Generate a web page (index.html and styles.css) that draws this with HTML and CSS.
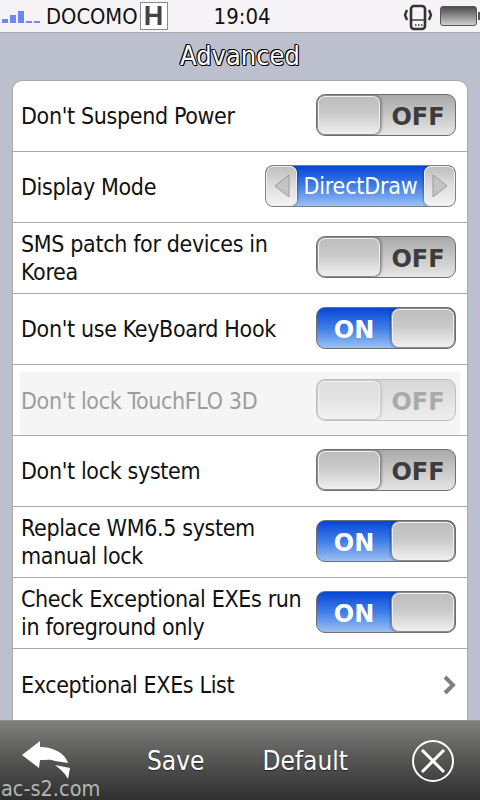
FILE: index.html
```html
<!DOCTYPE html>
<html lang="en">

<head>
    <meta charset="UTF-8">
    <meta name="viewport" content="width=device-width, initial-scale=1.0">
    <title>Advanced</title>
    <link rel="stylesheet" href="styles.css">
</head>

<body>
    <div class="status-bar">
        <div class="signal">
            <span class="bar bar-1"></span>
            <span class="bar bar-2"></span>
            <span class="bar bar-3"></span>
            <span class="bar bar-4"></span>
            <span class="bar bar-4"></span>
        </div>
        <span class="carrier">DOCOMO</span>
        <span class="net-type">H</span>
        <span class="clock">19:04</span>
        <svg class="vibrate" width="30" height="30" viewBox="0 0 30 30" fill="none" stroke="#333">
            <rect x="8" y="5" width="14" height="23" rx="3" stroke-width="2.6" />
            <path d="M9 19h12" stroke-width="1.4" />
            <path d="M12 24h1.5M15 24h1.5M18 24h1.5" stroke-width="1.6" />
            <path d="M4 9l-2 5 2 5M26 9l2 5-2 5" stroke-width="2.4" />
        </svg>
        <div class="battery"><span class="battery-cap"></span></div>
    </div>

    <h1 class="title">Advanced</h1>

    <div class="list">
        <div class="row">
            <span class="label">Don't Suspend Power</span>
            <div class="toggle off"><span class="knob"></span><span class="state">OFF</span></div>
        </div>
        <div class="row">
            <span class="label">Display Mode</span>
            <div class="spinner">
                <span class="spin-btn">
                    <svg width="16" height="24" viewBox="0 0 16 24"><path d="M15 1v22L1 12z" fill="#c4c4c4" stroke="#9a9a9a" /></svg>
                </span>
                <span class="spin-value">DirectDraw</span>
                <span class="spin-btn">
                    <svg width="16" height="24" viewBox="0 0 16 24"><path d="M1 1v22l14-11z" fill="#c4c4c4" stroke="#9a9a9a" /></svg>
                </span>
            </div>
        </div>
        <div class="row">
            <span class="label">SMS patch for devices in Korea</span>
            <div class="toggle off"><span class="knob"></span><span class="state">OFF</span></div>
        </div>
        <div class="row">
            <span class="label">Don't use KeyBoard Hook</span>
            <div class="toggle on"><span class="state">ON</span><span class="knob"></span></div>
        </div>
        <div class="row row-disabled">
            <div class="disabled-inner">
                <span class="label">Don't lock TouchFLO 3D</span>
                <div class="toggle off"><span class="knob"></span><span class="state">OFF</span></div>
            </div>
        </div>
        <div class="row">
            <span class="label">Don't lock system</span>
            <div class="toggle off"><span class="knob"></span><span class="state">OFF</span></div>
        </div>
        <div class="row">
            <span class="label">Replace WM6.5 system manual lock</span>
            <div class="toggle on"><span class="state">ON</span><span class="knob"></span></div>
        </div>
        <div class="row">
            <span class="label">Check Exceptional EXEs run in foreground only</span>
            <div class="toggle on"><span class="state">ON</span><span class="knob"></span></div>
        </div>
        <div class="row">
            <span class="label">Exceptional EXEs List</span>
            <svg class="chevron" width="14" height="20" viewBox="0 0 14 20" fill="none">
                <path d="M3 2l8 8-8 8" stroke="#808080" stroke-width="4" />
            </svg>
        </div>
    </div>

    <div class="toolbar">
        <svg class="back-icon" width="50" height="42" viewBox="0 0 50 42">
            <path d="M1 15L19 1v6c13 0 25 6 28 16l-13-2c-4-2-9-1-15-1l-1 8z" fill="#fff" />
            <path d="M34 25l15 3-2 11c-3-6-8-10-13-14z" fill="#fff" />
        </svg>
        <span class="tool-text save">Save</span>
        <span class="tool-text default">Default</span>
        <svg class="close-icon" width="44" height="44" viewBox="0 0 44 44" fill="none" stroke="#fff">
            <circle cx="22" cy="22" r="20" stroke-width="2" />
            <path d="M11 11l22 22M33 11L11 33" stroke-width="3" />
        </svg>
    </div>

    <span class="watermark">ac-s2.com</span>
</body>

</html>
```

FILE: styles.css
```css
html,
body {
    height: 100%;
}

body {
    font-family: 'DejaVu Sans', sans-serif;
    font-stretch: condensed;
    margin: 0;
    padding: 0;
    width: 480px;
    height: 800px;
    overflow: hidden;
    position: relative;
    background-color: #bcbfcd;
    color: #111;
}

.status-bar {
    height: 32px;
    display: flex;
    align-items: center;
    background-color: #f6f3f7;
    border-bottom: 1px solid #a8a8aa;
    box-sizing: content-box;
}

.signal {
    display: flex;
    align-items: flex-end;
    gap: 2px;
    width: 40px;
    height: 13px;
    margin: 0 0 -1px 2px;
}

.bar {
    width: 6px;
    background-color: #6c87f2;
}

.bar-1 {
    height: 4px;
}

.bar-2 {
    height: 8px;
}

.bar-3 {
    height: 12px;
}

.bar-4 {
    height: 2px;
}

.carrier {
    margin-left: 4px;
    font-size: 21.7px;
}

.net-type {
    width: 26px;
    height: 26px;
    margin-left: 2px;
    border: 1px solid #8a8a8a;
    background-color: #fff;
    color: #444;
    font-family: 'Liberation Sans', sans-serif;
    font-size: 27px;
    font-weight: bold;
    line-height: 26px;
    text-align: center;
}

.clock {
    margin-left: 46px;
    font-size: 22px;
}

.vibrate {
    margin-left: auto;
}

.battery {
    position: relative;
    width: 35px;
    height: 18px;
    margin: 0 3px 0 7px;
    border: 1px solid #555;
    border-radius: 3px;
    background: linear-gradient(#4c4c4c, #cfcfcf);
}

.battery-cap {
    position: absolute;
    right: -4px;
    top: 5px;
    width: 2px;
    height: 8px;
    background-color: #555;
}

.title {
    margin: 0;
    height: 47px;
    font-size: 27px;
    font-weight: normal;
    line-height: 45px;
    text-align: center;
    color: #fff;
    text-shadow: -1px 0 #000, 1px 0 #000, 0 -1px #000, 0 1px #000, 1px 1px #000, -1px -1px #000;
}

.list {
    margin: 0 12px;
    height: 640px;
    background-color: #fff;
    border-radius: 10px 10px 0 0;
    border: 1px solid #a9a9ad;
    border-bottom: none;
    box-sizing: border-box;
    overflow: hidden;
}

.row {
    height: 71px;
    display: flex;
    align-items: center;
    justify-content: space-between;
    padding: 0 11px 0 8px;
    border-bottom: 1px solid #a8a8a8;
    box-sizing: border-box;
}

.row:last-child {
    border-bottom: none;
}

.label {
    font-size: 23px;
    line-height: 28px;
    letter-spacing: -0.35px;
    color: #111;
    width: 290px;
}

.row-disabled {
    padding: 7px 7px 0 7px;
    align-items: stretch;
}

.disabled-inner {
    flex: 1;
    display: flex;
    align-items: center;
    justify-content: space-between;
    padding: 0 4px 6px 1px;
    background-color: #f5f5f5;
}

.row-disabled .label {
    color: #9d9d9d;
}

.row-disabled .toggle {
    opacity: 0.4;
}

.toggle {
    width: 140px;
    height: 42px;
    margin-bottom: 2px;
    flex-shrink: 0;
    display: flex;
    border: 1px solid #6f6f6f;
    border-radius: 9px;
    box-sizing: border-box;
    overflow: hidden;
}

.toggle.off {
    background: linear-gradient(#a9a9a9, #e6e6e6);
}

.toggle.on {
    background: linear-gradient(#0746d8, #3f7ee8 50%, #9cc0f2);
}

.knob {
    width: 64px;
    height: 40px;
    border: 1px solid #8c8c8c;
    border-radius: 8px;
    background: linear-gradient(#bdbdbd, #c9c9c9 45%, #f0f0f0);
    box-shadow: inset 0 0 0 1px #efefef, 0 0 3px rgba(0, 0, 0, 0.6);
    box-sizing: border-box;
    flex-shrink: 0;
}

.state {
    flex: 1;
    text-align: center;
    font-family: 'DejaVu Sans', sans-serif;
    font-stretch: normal;
    font-size: 24px;
    font-weight: bold;
    line-height: 44px;
    color: #3c3c3c;
}

.toggle.on .state {
    color: #fff;
}

.spinner {
    width: 191px;
    height: 42px;
    margin-bottom: 2px;
    flex-shrink: 0;
    display: flex;
    border: 1px solid #7d7d7d;
    border-radius: 8px;
    background: linear-gradient(#0746d8, #3f7ee8 50%, #9cc0f2);
    box-sizing: border-box;
    overflow: hidden;
}

.spin-btn {
    width: 31px;
    flex-shrink: 0;
    display: flex;
    align-items: center;
    justify-content: center;
    border-radius: 7px;
    background: linear-gradient(#bdbdbd, #dedede 50%, #f4f4f4);
    box-shadow: inset 0 0 0 1px #efefef, 0 0 3px rgba(0, 0, 0, 0.6);
}

.spin-value {
    flex: 1;
    font-size: 23px;
    letter-spacing: -0.2px;
    line-height: 40px;
    text-align: center;
    color: #fff;
}

.toolbar {
    height: 80px;
    display: flex;
    align-items: center;
    background: linear-gradient(#7f7f7d, #585957 45%, #2e2f2e);
    border-top: 1px solid #8e8e8e;
    box-sizing: border-box;
}

.tool-text {
    font-size: 26px;
    color: #fff;
    text-shadow: 0 1px 1px #222;
}

.back-icon {
    margin: 0 0 0 21px;
}

.save {
    margin-left: 76px;
}

.default {
    margin-left: 58px;
}

.close-icon {
    margin-left: auto;
    margin-right: 25px;
}

.watermark {
    position: absolute;
    left: 1px;
    bottom: 0;
    font-size: 21.5px;
    line-height: 22px;
    color: #b5b5b5;
}
```
